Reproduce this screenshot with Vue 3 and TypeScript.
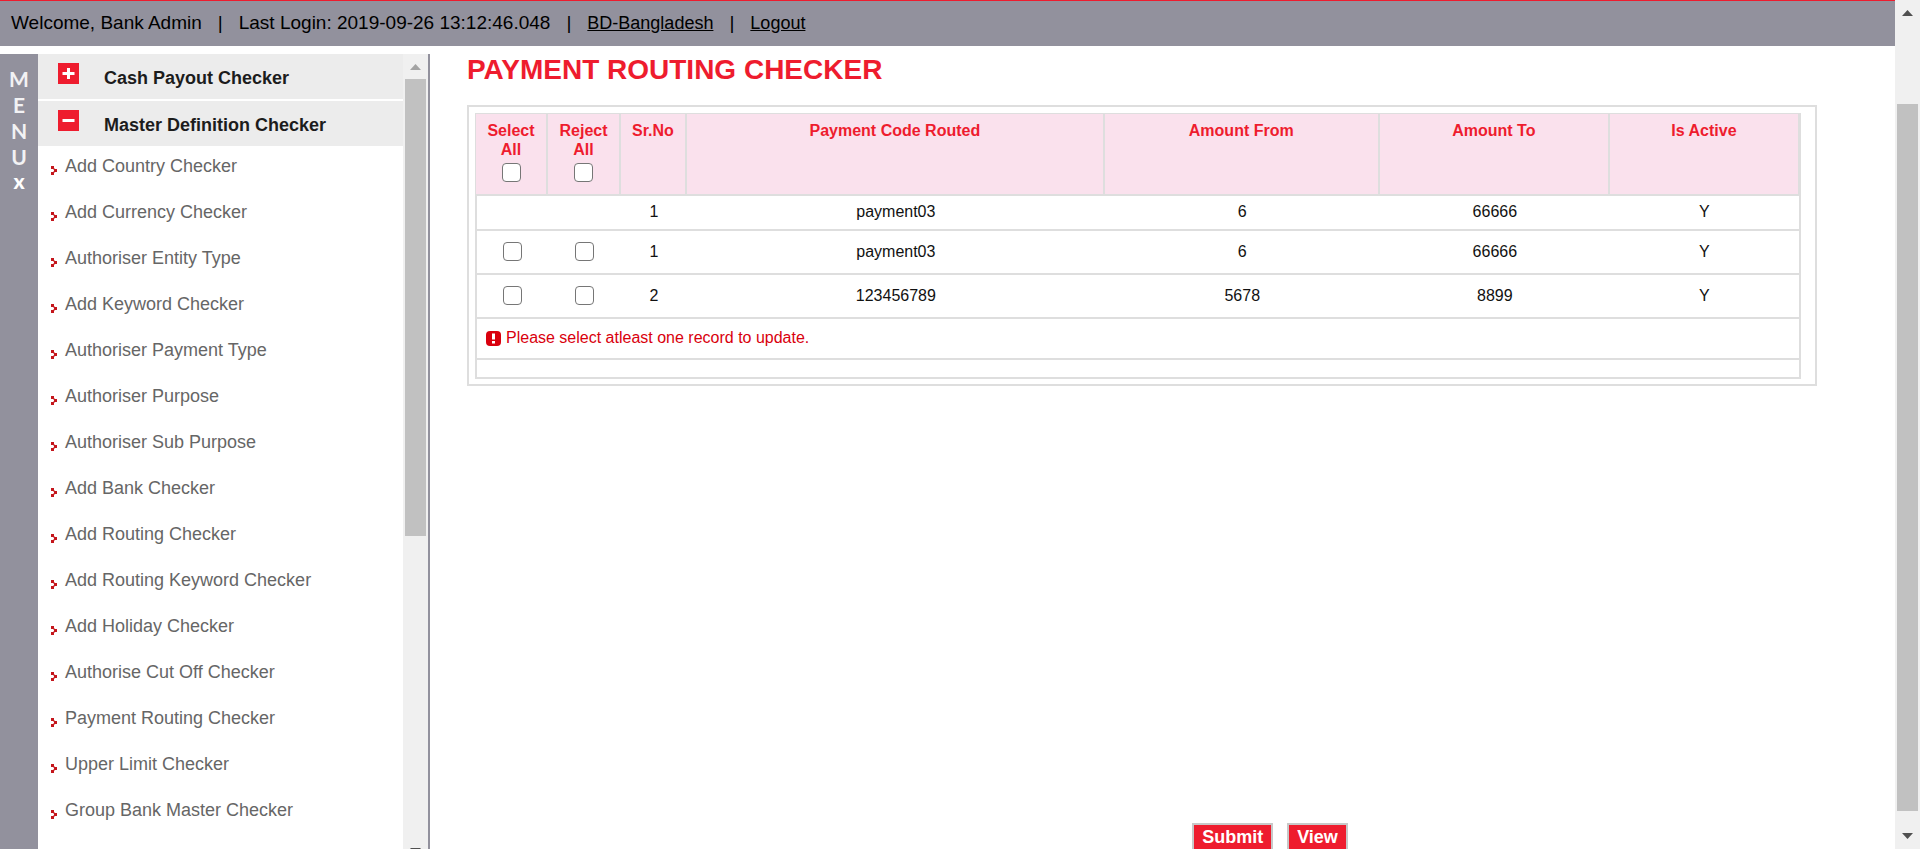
<script setup lang="ts">
import { ref } from 'vue'

interface PaymentRow {
  selectable: boolean
  no: number
  code: string
  from: string
  to: string
  active: string
}

const menuLetters: string[] = ['M', 'E', 'N', 'U']

const checkers: string[] = [
  'Add Country Checker',
  'Add Currency Checker',
  'Authoriser Entity Type',
  'Add Keyword Checker',
  'Authoriser Payment Type',
  'Authoriser Purpose',
  'Authoriser Sub Purpose',
  'Add Bank Checker',
  'Add Routing Checker',
  'Add Routing Keyword Checker',
  'Add Holiday Checker',
  'Authorise Cut Off Checker',
  'Payment Routing Checker',
  'Upper Limit Checker',
  'Group Bank Master Checker',
]

const rows: PaymentRow[] = [
  { selectable: false, no: 1, code: 'payment03', from: '6', to: '66666', active: 'Y' },
  { selectable: true, no: 1, code: 'payment03', from: '6', to: '66666', active: 'Y' },
  { selectable: true, no: 2, code: '123456789', from: '5678', to: '8899', active: 'Y' },
]

const selected = ref<boolean[]>(rows.map(() => false))
const rejected = ref<boolean[]>(rows.map(() => false))

function setAll(target: boolean[], event: Event): void {
  const on = (event.target as HTMLInputElement).checked
  rows.forEach((row, i) => {
    target[i] = row.selectable && on
  })
}
</script>

<template>
  <div class="window">
    <div class="page">
      <header class="topbar">
        <span>Welcome, Bank Admin</span>
        <span>|</span>
        <span>Last Login: 2019-09-26 13:12:46.048</span>
        <span>|</span>
        <a href="#">BD-Bangladesh</a>
        <span>|</span>
        <a href="#">Logout</a>
      </header>

      <div class="body">
        <aside class="sidebar">
          <button class="strip" type="button" aria-label="Close menu">
            <span v-for="l in menuLetters" :key="l">{{ l }}</span>
            <span class="close">x</span>
          </button>
          <nav class="panel">
            <button class="group" type="button" aria-expanded="false">
              <svg class="toggle" viewBox="0 0 21 21" aria-hidden="true">
                <rect width="21" height="21" fill="#ee1c2e" />
                <path d="M10.500 5v11M4.500 10.500h12" stroke="#fff" stroke-width="3" />
              </svg>
              <span>Cash Payout Checker</span>
            </button>
            <button class="group" type="button" aria-expanded="true">
              <svg class="toggle" viewBox="0 0 21 21" aria-hidden="true">
                <rect width="21" height="21" fill="#ee1c2e" />
                <path d="M4.500 10.500h12" stroke="#fff" stroke-width="3" />
              </svg>
              <span>Master Definition Checker</span>
            </button>
            <ul class="links">
              <li v-for="c in checkers" :key="c">
                <svg class="bullet" viewBox="0 0 6 9" aria-hidden="true">
                  <path d="M0 0h3v3h-3zM0 6h3v3h-3zM3 3h3v3h-3z" fill="#c4161c" />
                  <path d="M3 2h1v1h-1zM3 6h1v1h-1zM2 3h1v1h-1zM2 5h1v1h-1z" fill="#e79a9c" />
                </svg>
                <a href="#">{{ c }}</a>
              </li>
            </ul>
          </nav>
          <div class="scroll side-scroll" aria-hidden="true">
            <svg class="arrow faded" viewBox="0 0 25 25"><path d="M7 16l5.500-6 5.500 6z" /></svg>
            <div class="thumb"></div>
            <div class="rest"></div>
            <svg class="arrow" viewBox="0 0 25 25"><path d="M7 9h11l-5.500 6z" /></svg>
          </div>
        </aside>

        <main class="main">
          <h1>PAYMENT ROUTING CHECKER</h1>
          <div class="frame">
            <table>
              <colgroup>
                <col class="c-check" />
                <col class="c-check" />
                <col class="c-no" />
                <col class="c-code" />
                <col class="c-from" />
                <col class="c-to" />
                <col />
              </colgroup>
              <thead>
                <tr>
                  <th scope="col">
                    <label for="select-all">Select All</label>
                    <input id="select-all" type="checkbox" @change="setAll(selected, $event)" />
                  </th>
                  <th scope="col">
                    <label for="reject-all">Reject All</label>
                    <input id="reject-all" type="checkbox" @change="setAll(rejected, $event)" />
                  </th>
                  <th scope="col">Sr.No</th>
                  <th scope="col">Payment Code Routed</th>
                  <th scope="col">Amount From</th>
                  <th scope="col">Amount To</th>
                  <th scope="col">Is Active</th>
                </tr>
              </thead>
              <tbody>
                <tr v-for="(r, i) in rows" :key="i" :class="{ tall: r.selectable }">
                  <td>
                    <input v-if="r.selectable" v-model="selected[i]" type="checkbox" :aria-label="'Select ' + r.code" />
                  </td>
                  <td>
                    <input v-if="r.selectable" v-model="rejected[i]" type="checkbox" :aria-label="'Reject ' + r.code" />
                  </td>
                  <td>{{ r.no }}</td>
                  <td>{{ r.code }}</td>
                  <td>{{ r.from }}</td>
                  <td>{{ r.to }}</td>
                  <td>{{ r.active }}</td>
                </tr>
                <tr class="message">
                  <td colspan="7">
                    <div class="error" role="alert">
                      <svg class="alert" viewBox="0 0 15 15" aria-hidden="true">
                        <rect width="15" height="15" rx="4" fill="#d9000d" />
                        <path d="M6 2.500h3v6h-3zM6 10h3v2.500h-3z" fill="#fff" />
                      </svg>
                      <span>Please select atleast one record to update.</span>
                    </div>
                  </td>
                </tr>
                <tr class="blank">
                  <td colspan="7"></td>
                </tr>
              </tbody>
            </table>
          </div>
          <div class="actions">
            <button type="button">Submit</button>
            <button type="button">View</button>
          </div>
        </main>
      </div>
    </div>

    <div class="scroll page-scroll" aria-hidden="true">
      <svg class="arrow" viewBox="0 0 25 25"><path d="M7 16l5.500-6 5.500 6z" /></svg>
      <div class="above"></div>
      <div class="thumb"></div>
      <div class="rest"></div>
      <svg class="arrow" viewBox="0 0 25 25"><path d="M7 9h11l-5.500 6z" /></svg>
    </div>
  </div>
</template>

<style>
html,
body {
  margin: 0;
  overflow: hidden;
}
</style>

<style scoped>
.window {
  display: flex;
  height: 100vh;
  overflow: hidden;
  background: #fff;
  color: #111;
  font-family: "Liberation Sans", Arial, sans-serif;
  font-size: 16px;
}
button {
  font-family: inherit;
  border: 0;
  margin: 0;
  padding: 0;
  cursor: pointer;
}
.page {
  flex: 1;
  min-width: 0;
  display: flex;
  flex-direction: column;
}
.topbar {
  display: flex;
  align-items: baseline;
  gap: 16px;
  box-sizing: border-box;
  height: 46px;
  padding: 10px 11px;
  border-top: 1px solid #ee1c2e;
  background: #92919d;
  color: #000;
  font-size: 19px;
  line-height: 24px;
  white-space: nowrap;
}
.topbar a {
  color: #000;
  font-size: 18px;
}
.body {
  flex: 1;
  min-height: 0;
  display: flex;
  margin-top: 8px;
}
.sidebar {
  display: flex;
  box-sizing: border-box;
  width: 430px;
  flex: none;
  overflow: hidden;
  border-right: 2px solid #92919d;
}
.strip {
  display: flex;
  flex-direction: column;
  align-items: center;
  width: 38px;
  padding-top: 12px;
  background: #92919d;
  color: #f2f2f4;
  font-family: Lato, sans-serif;
  font-size: 21px;
  font-weight: 700;
  line-height: 26px;
}
.close {
  font-weight: 900;
  color: #fff;
  line-height: 22px;
}
.panel {
  flex: 1;
}
.group {
  display: flex;
  align-items: flex-start;
  gap: 25px;
  box-sizing: border-box;
  width: 100%;
  height: 45px;
  padding: 9px 20px;
  background: #ececec;
  color: #1c1c1c;
  font-size: 18px;
  font-weight: bold;
  line-height: 30px;
}
.group + .group {
  margin-top: 2px;
}
.toggle {
  width: 21px;
  height: 21px;
}
.links {
  list-style: none;
  margin: 0;
  padding: 1px 0 0 13px;
}
.links li {
  display: flex;
  align-items: center;
  gap: 8px;
  height: 38px;
  margin-bottom: 8px;
}
.links a {
  color: #666;
  font-size: 18px;
  text-decoration: none;
}
.bullet {
  width: 6px;
  height: 9px;
  margin-top: 8px;
}
.scroll {
  display: flex;
  flex-direction: column;
  flex: none;
  width: 25px;
  background: #f0f0f0;
}
.arrow {
  flex: none;
  width: 25px;
  height: 25px;
  fill: #505050;
}
.arrow.faded {
  fill: #a3a3a3;
}
.thumb {
  margin: 0 2px;
  background: #c1c1c1;
}
.side-scroll .thumb {
  flex: 457;
}
.side-scroll .rest {
  flex: 303;
}
.side-scroll .arrow:last-child {
  margin-bottom: -15px;
}
.page-scroll .above {
  flex: 79;
}
.page-scroll .thumb {
  flex: 707;
}
.page-scroll .rest {
  flex: 13;
}
.main {
  flex: 1;
  min-width: 0;
  display: flex;
  flex-direction: column;
  padding: 0 78px 0 37px;
  overflow: hidden;
}
h1 {
  margin: 0 0 19px;
  color: #ee1c2e;
  font-size: 28px;
  font-weight: bold;
  line-height: 32px;
}
.frame {
  padding: 6px 14px 5px 6px;
  border: 2px solid #dedede;
}
table {
  width: 100%;
  table-layout: fixed;
  border-collapse: separate;
  border-spacing: 0;
  text-align: center;
}
.c-check {
  width: 73px;
}
.c-no {
  width: 66px;
}
.c-code {
  width: 31.5%;
}
.c-from {
  width: 20.75%;
}
.c-to {
  width: 17.35%;
}
th {
  box-sizing: border-box;
  height: 83px;
  padding: 7px 8px;
  border: 0 solid #dedede;
  border-width: 1px 2px 2px 0;
  background: #fae1ed;
  color: #ee1c2e;
  line-height: 19px;
  vertical-align: top;
}
th:first-child {
  border-left-width: 1px;
}
th:last-child {
  border-right-width: 3px;
}
th label {
  display: block;
}
td {
  box-sizing: border-box;
  height: 35px;
  padding: 0 0 1px;
  border: 0 solid #dedede;
  border-bottom-width: 2px;
}
td:first-child {
  border-left-width: 2px;
}
td:last-child {
  border-right-width: 2px;
}
.tall td {
  height: 44px;
}
.message td {
  height: 41px;
}
.blank td {
  height: 19px;
}
input[type="checkbox"] {
  appearance: none;
  display: block;
  box-sizing: border-box;
  width: 19px;
  height: 19px;
  margin: 0 auto;
  border: 1px solid #767676;
  border-radius: 4px;
  background: #fff;
}
th input[type="checkbox"] {
  margin-top: 4px;
}
input[type="checkbox"]:checked {
  background: #0075ff;
}
.error {
  display: flex;
  align-items: center;
  gap: 5px;
  padding-left: 9px;
  color: #d9000d;
}
.alert {
  width: 15px;
  height: 15px;
}
.actions {
  display: flex;
  flex: none;
  justify-content: center;
  gap: 14px;
  margin-top: auto;
  padding-left: 256px;
}
.actions button {
  height: 26px;
  padding: 0 8px;
  border: 2px solid #c8c8c8;
  border-bottom-width: 0;
  background: #ee1c2e;
  color: #fff;
  font-size: 18px;
  font-weight: bold;
  line-height: 22px;
}
</style>
